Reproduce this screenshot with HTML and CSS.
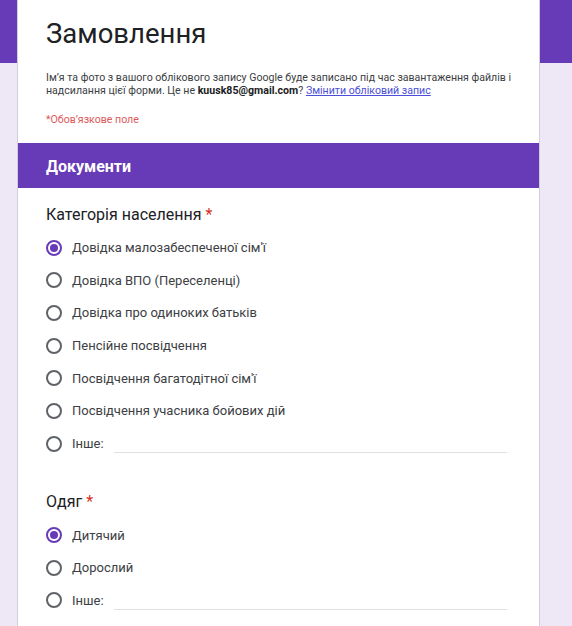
FILE: index.html
```html
<!DOCTYPE html>
<html lang="uk">
<head>
<meta charset="utf-8">
<title>Замовлення</title>
<link rel="stylesheet" href="styles.css">
</head>
<body>
<div class="page">
  <div class="card">
    <div class="head">
      <h1 class="title">Замовлення</h1>
      <p class="desc">Ім’я та фото з вашого облікового запису Google буде записано під час завантаження файлів і надсилання цієї форми. Це не <b>kuusk85@gmail.com</b>? <a href="#" class="link">Змінити обліковий запис</a></p>
      <p class="req">*Обов’язкове поле</p>
    </div>
    <div class="section">Документи</div>
    <div class="question q1">
      <div class="qtitle">Категорія населення <span class="star">*</span></div>
      <div class="opt"><span class="radio on"></span><span class="label">Довідка малозабеспеченої сім'ї</span></div>
      <div class="opt"><span class="radio"></span><span class="label">Довідка ВПО (Переселенці)</span></div>
      <div class="opt"><span class="radio"></span><span class="label">Довідка про одиноких батьків</span></div>
      <div class="opt"><span class="radio"></span><span class="label">Пенсійне посвідчення</span></div>
      <div class="opt"><span class="radio"></span><span class="label">Посвідчення багатодітної сім'ї</span></div>
      <div class="opt"><span class="radio"></span><span class="label">Посвідчення учасника бойових дій</span></div>
      <div class="opt"><span class="radio"></span><span class="label">Інше:</span><span class="other"></span></div>
    </div>
    <div class="question q2">
      <div class="qtitle">Одяг <span class="star">*</span></div>
      <div class="opt"><span class="radio on"></span><span class="label">Дитячий</span></div>
      <div class="opt"><span class="radio"></span><span class="label">Дорослий</span></div>
      <div class="opt"><span class="radio"></span><span class="label">Інше:</span><span class="other"></span></div>
    </div>
  </div>
</div>
</body>
</html>
```
FILE: styles.css
```css
html, body {
  margin: 0;
  padding: 0;
}
body {
  background: linear-gradient(#673ab7 0, #673ab7 63px, #ede7f6 63px);
  font-family: Roboto, "Noto Sans", Arial, sans-serif;
  color: #202124;
  height: 626px;
  overflow: hidden;
}
.page {
  padding-left: 17px;
}
.card {
  width: 521px;
  background: #fff;
  border-left: 1px solid #d3cedb;
  border-right: 1px solid #d3cedb;
  min-height: 626px;
}
.head {
  padding: 16px 16px 15.8px 28px;
}
.title {
  margin: 0;
  font-size: 27.5px;
  font-weight: 400;
  line-height: 36px;
  color: #202124;
}
.desc {
  margin: 19px 0 0;
  font-size: 10.6px;
  line-height: 13px;
  color: #3c4043;
}
.desc b {
  color: #202124;
  font-weight: 700;
}
.link {
  color: #4b4fd8;
  text-decoration: underline;
}
.req {
  margin: 14.5px 0 0;
  font-size: 10.6px;
  line-height: 16px;
  color: #dd5a5a;
}
.section {
  background: #673ab7;
  color: #fff;
  font-size: 16px;
  font-weight: 700;
  height: 42px;
  line-height: 42px;
  padding: 3px 28px 0;
}
.question {
  padding: 0 28px;
}
.q1 {
  padding-top: 15.2px;
}
.q2 {
  padding-top: 29.8px;
}
.qtitle {
  font-size: 16px;
  line-height: 24px;
  margin-bottom: 3.8px;
  color: #202124;
}
.q2 .qtitle {
  margin-bottom: 5px;
}
.star {
  color: #d93025;
}
.opt {
  height: 32.67px;
  display: flex;
  align-items: center;
  font-size: 13px;
  color: #3c4043;
}
.radio {
  box-sizing: border-box;
  width: 16px;
  height: 16px;
  border: 2px solid #5f6368;
  border-radius: 50%;
  margin-right: 10px;
  flex: none;
  display: flex;
  align-items: center;
  justify-content: center;
}
.radio.on {
  border-color: #673ab7;
}
.radio.on::after {
  content: "";
  width: 8px;
  height: 8px;
  border-radius: 50%;
  background: #673ab7;
}
.other {
  width: 393px;
  height: 1px;
  background: #e0e0e0;
  margin-left: 10px;
  align-self: flex-end;
  margin-bottom: 6.5px;
}
```
